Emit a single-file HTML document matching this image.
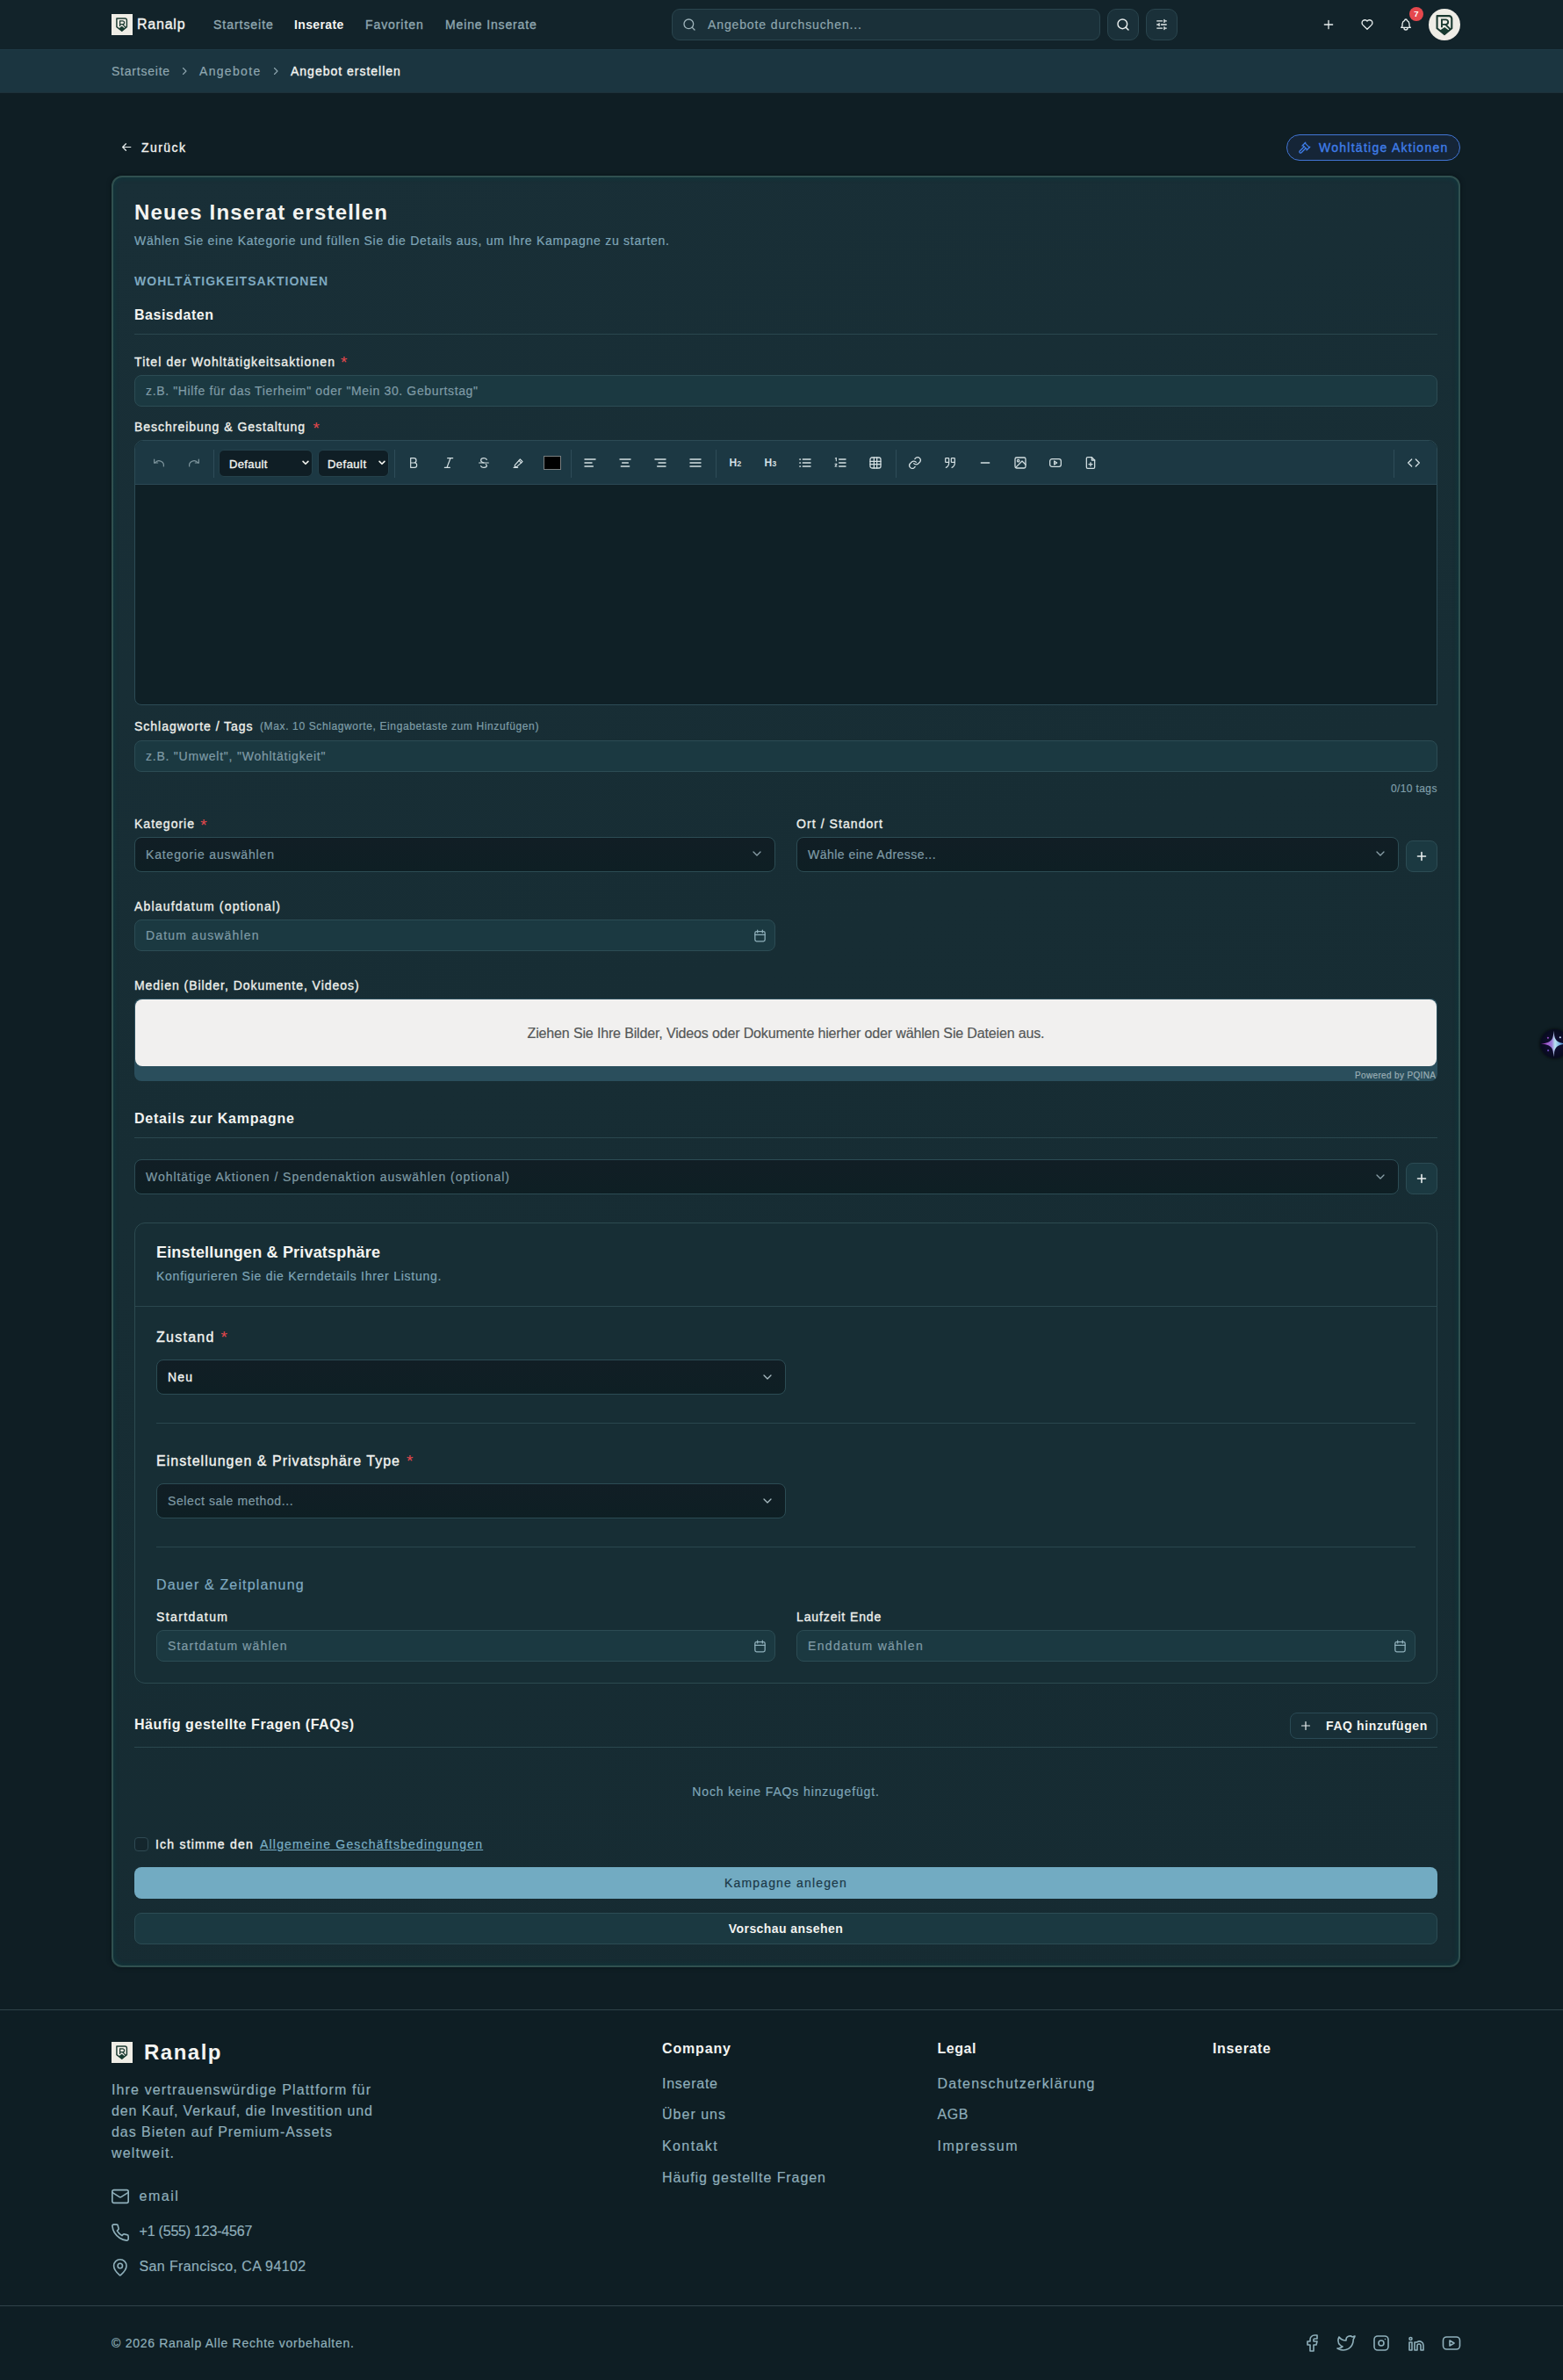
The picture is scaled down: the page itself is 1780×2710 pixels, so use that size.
<!DOCTYPE html>
<html lang="de">
<head>
<meta charset="utf-8">
<title>Ranalp - Angebot erstellen</title>
<style>
*{box-sizing:border-box;margin:0;padding:0}
html,body{width:1780px;height:2710px;overflow:hidden}
body{position:relative;background:#0f1e24;font-family:"Liberation Sans",sans-serif;color:#f3f4f1}
.a{position:absolute}
.t{position:absolute;white-space:nowrap;line-height:1;font-size:14px;top:calc(var(--b)*1px - 0.8465em);-webkit-text-stroke:0.2px currentColor}
svg{display:block;overflow:visible}
.ic{position:absolute;fill:none;stroke:currentColor;stroke-linecap:round;stroke-linejoin:round}
#hdr{left:0;top:0;width:1780px;height:56px;background:#12232a}
#bc{left:0;top:56px;width:1780px;height:50px;background:#1b3540;border-top:1px solid #1f3a45;border-bottom:1px solid #1d3139}
.nav{color:#8fa7b0}
.w{color:#f3f4f1}
.req{color:#e5484d;-webkit-text-stroke:0}
.lbl{color:#eef0ec;-webkit-text-stroke:0.35px currentColor}
.m{-webkit-text-stroke:0.35px currentColor}
.ph{color:#7f9ba6}
.inp{position:absolute;background:#1b3941;border:1px solid #2c4c54;border-radius:8px}
.sel{position:absolute;background:linear-gradient(180deg,#111e25,#0e1f24);border:1px solid #2c4c54;border-radius:8px}
.dv{position:absolute;height:1px;background:#2a474e}
.b36{position:absolute;width:36px;height:36px;border:1px solid #2c4c54;border-radius:8px;background:#1b3941}
.tb{color:#d3dfe2}
.ft{color:#8eaebb;font-size:16px}
.t[style*="font-weight:bold"]{-webkit-text-stroke:0}
.sep{position:absolute;width:1px;height:32px;top:512px;background:#2e4c58}
</style>
</head>
<body>

<svg width="0" height="0" style="position:absolute"><defs><symbol id="lg" viewBox="0 0 24 24"><path d="M5.9 4.9H15.2a2.2 2.2 0 0 1 2.2 2.2V14.6L11.8 19.3 5.9 14.6z" fill="none" stroke="#1b3a31" stroke-width="1.45" stroke-linejoin="round"/><path d="M9.6 14V7.8h3.1a1.9 1.9 0 0 1 0 3.8H9.6M12.5 11.6l3.9 3.9" fill="none" stroke="#1b3a31" stroke-width="1.3"/><path d="M8 16.4 11.8 13.7 15.3 16.4 11.8 19.6z" fill="#173a30"/></symbol></defs></svg>
<!-- ================= HEADER ================= -->
<div id="hdr" class="a"></div>
<svg class="a" style="left:127px;top:16px" width="24" height="24" viewBox="0 0 24 24"><rect width="24" height="24" fill="#efede6"/><use href="#lg"/></svg>
<div class="t w m" style="--b:34;left:156px;font-size:16px;letter-spacing:0.777px">Ranalp</div>
<div class="t nav m" style="--b:33.3;left:243px;letter-spacing:0.962px">Startseite</div>
<div class="t w" style="--b:33.3;left:335px;font-weight:bold;letter-spacing:0.371px">Inserate</div>
<div class="t nav m" style="--b:33.3;left:416px;letter-spacing:0.916px">Favoriten</div>
<div class="t nav m" style="--b:33.3;left:507px;letter-spacing:0.860px">Meine Inserate</div>

<!-- search -->
<div class="a" style="left:765px;top:10px;width:488px;height:36px;background:#1a3039;border:1px solid #2a454e;border-radius:9px"></div>
<svg class="ic" style="left:777px;top:20px;color:#9fb4bb" width="16" height="16" viewBox="0 0 24 24" stroke-width="2"><circle cx="11" cy="11" r="8"/><path d="m21 21-4.3-4.3"/></svg>
<div class="t" style="--b:33;left:806px;color:#8ea6ae;letter-spacing:0.878px">Angebote durchsuchen...</div>
<div class="b36" style="left:1261px;top:10px;background:#1a3039;border-color:#2a454e;border-radius:10px"></div>
<svg class="ic" style="left:1271px;top:20px;color:#e8eeee" width="16" height="16" viewBox="0 0 24 24" stroke-width="2.2"><circle cx="11" cy="11" r="8"/><path d="m21 21-4.3-4.3"/></svg>
<div class="b36" style="left:1305px;top:10px;background:#1a3039;border-color:#2a454e;border-radius:10px"></div>
<svg class="ic" style="left:1316px;top:21px;color:#e8eeee" width="14" height="14" viewBox="0 0 24 24" stroke-width="2.2"><path d="M3 5h10M17 5h4M3 12h4M11 12h10M3 19h10M17 19h4M17 2.5v5M7 9.5v5M17 16.5v5"/></svg>

<!-- right icons -->
<svg class="ic" style="left:1506px;top:21px;color:#e8eeee" width="14" height="14" viewBox="0 0 24 24" stroke-width="2.2"><path d="M12 4v16M4 12h16"/></svg>
<svg class="ic" style="left:1549px;top:20px;color:#e8eeee" width="16" height="16" viewBox="0 0 24 24" stroke-width="2"><path d="M19.5 12.6 12 20l-7.5-7.4A5 5 0 1 1 12 6a5 5 0 1 1 7.5 6.6z"/></svg>
<svg class="ic" style="left:1593px;top:20px;color:#e8eeee" width="16" height="16" viewBox="0 0 24 24" stroke-width="2"><path d="M10 5a2 2 0 1 1 4 0a7 7 0 0 1 4 6v3a4 4 0 0 0 2 3H4a4 4 0 0 0 2-3v-3a7 7 0 0 1 4-6"/><path d="M9 17v1a3 3 0 0 0 6 0v-1"/></svg>
<div class="a" style="left:1605px;top:8px;width:16px;height:16px;border-radius:50%;background:#e5484d"></div>
<div class="t" style="--b:18.6;left:1605px;width:16px;text-align:center;font-size:9.5px;font-weight:bold;color:#fff">7</div>
<div class="a" style="left:1627px;top:10px;width:36px;height:36px;border-radius:50%;background:#efede6;overflow:hidden"></div>
<svg class="a" style="left:1628px;top:11.2px" width="34.9" height="34.9" viewBox="0 0 24 24"><use href="#lg"/></svg>

<!-- ================= BREADCRUMB ================= -->
<div id="bc" class="a"></div>
<div class="t nav" style="--b:86.2;left:127px;letter-spacing:0.773px">Startseite</div>
<svg class="ic" style="left:204px;top:75.3px;color:#8fa7b0" width="12" height="12" viewBox="0 0 24 24" stroke-width="2.2"><path d="m9 5 7 7-7 7"/></svg>
<div class="t nav" style="--b:86.2;left:227px;letter-spacing:1.321px">Angebote</div>
<svg class="ic" style="left:308px;top:75.3px;color:#8fa7b0" width="12" height="12" viewBox="0 0 24 24" stroke-width="2.2"><path d="m9 5 7 7-7 7"/></svg>
<div class="t w m" style="--b:86.2;left:331px;letter-spacing:0.995px">Angebot erstellen</div>

<!-- ================= BACK ROW ================= -->
<svg class="ic" style="left:138px;top:161px;color:#e8eeee" width="13" height="13" viewBox="0 0 24 24" stroke-width="2.2"><path d="M20 12H4M10 5l-7 7 7 7"/></svg>
<div class="t w m" style="--b:173;left:161px;letter-spacing:1.440px">Zurück</div>
<div class="a" style="left:1465px;top:153px;width:198px;height:30px;border:1px solid #4276d6;border-radius:15px;background:#152537"></div>
<svg class="ic" style="left:1478px;top:160.5px;color:#3f7de8" width="15" height="15" viewBox="0 0 24 24" stroke-width="2"><path d="m14.5 12.5-8 8a2.119 2.119 0 1 1-3-3l8-8"/><path d="m16 16 6-6"/><path d="m8 8 6-6"/><path d="m9 7 8 8"/><path d="m21 11-8-8"/></svg>
<div class="t m" style="--b:172.6;left:1502px;color:#3f7de8;letter-spacing:1.267px">Wohltätige Aktionen</div>

<!-- ================= CARD ================= -->
<div class="a" id="card" style="left:127px;top:200px;width:1536px;height:2040px;border:2px solid #30504f;border-radius:12px;background:linear-gradient(160deg,#192f37 0%,#172d34 45%,#162b32 100%);box-shadow:inset 0 0 5px 1px rgba(12,58,64,0.75),0 0 4px 1px rgba(5,15,20,0.5)"></div>

<!-- title -->
<div class="t w" style="--b:250;left:153px;font-size:24px;font-weight:bold;letter-spacing:1.146px">Neues Inserat erstellen</div>
<div class="t" style="--b:279;left:153px;color:#7ea5b7;letter-spacing:0.737px">Wählen Sie eine Kategorie und füllen Sie die Details aus, um Ihre Kampagne zu starten.</div>
<div class="t" style="--b:325;left:153px;font-size:14px;font-weight:bold;color:#7fa9c0;letter-spacing:1.045px">WOHLTÄTIGKEITSAKTIONEN</div>
<div class="t w" style="--b:365;left:153px;font-size:16px;font-weight:bold;letter-spacing:0.514px">Basisdaten</div>
<div class="dv" style="left:153px;top:380px;width:1484px"></div>

<!-- Titel -->
<div class="t lbl" style="--b:416.6;left:153px;letter-spacing:1.104px">Titel der Wohltätigkeitsaktionen</div>
<div class="t req" style="--b:419.4;left:388px;font-size:19px">*</div>
<div class="inp" style="left:153px;top:427px;width:1484px;height:36px"></div>
<div class="t ph" style="--b:450;left:166px;letter-spacing:0.640px">z.B. "Hilfe für das Tierheim" oder "Mein 30. Geburtstag"</div>

<!-- Beschreibung -->
<div class="t lbl" style="--b:491;left:153px;letter-spacing:0.981px">Beschreibung &amp; Gestaltung</div>
<div class="t req" style="--b:494.4;left:356.5px;font-size:19px">*</div>
<div class="a" style="left:153px;top:501px;width:1484px;height:302px;border:1px solid #2c4b55;border-radius:10px 10px 0 8px;background:#0f2026;overflow:hidden">
  <div class="a" style="left:0;top:0;width:1482px;height:50px;background:#1c3843;border-bottom:1px solid #2b4854"></div>
</div>

<!-- toolbar -->
<svg class="ic tb" style="left:173.0px;top:519.0px;color:#7f969e;" width="16" height="16" viewBox="0 0 24 24" stroke-width="1.8"><path d="M4 6v6h6"/><path d="M20 18a8 8 0 0 0-14-6.5L4 12"/></svg>
<svg class="ic tb" style="left:213.0px;top:519.0px;color:#7f969e;" width="16" height="16" viewBox="0 0 24 24" stroke-width="1.8"><path d="M20 6v6h-6"/><path d="M4 18a8 8 0 0 1 14-6.5l2 .5"/></svg>
<div class="sep" style="left:243px"></div>
<div class="sep" style="left:449px"></div>
<div class="sep" style="left:650px"></div>
<div class="sep" style="left:815px"></div>
<div class="sep" style="left:1020px"></div>
<div class="sep" style="left:1587px"></div>
<div class="a" style="left:249px;top:512px;width:107px;height:31px;background:#0f1e25;border:1px solid #24414b;border-radius:6px"></div>
<div class="t w m" style="--b:532.7;left:261px;font-size:13px;letter-spacing:0.366px">Default</div>
<svg class="ic" style="left:343px;top:522px;color:#f0f2ee" width="10" height="10" viewBox="0 0 24 24" stroke-width="4"><path d="m5 8 7 7 7-7"/></svg>
<div class="a" style="left:362px;top:512px;width:81px;height:31px;background:#0f1e25;border:1px solid #24414b;border-radius:6px"></div>
<div class="t w m" style="--b:532.7;left:373px;font-size:13px;letter-spacing:0.468px">Default</div>
<svg class="ic" style="left:430px;top:522px;color:#f0f2ee" width="10" height="10" viewBox="0 0 24 24" stroke-width="4"><path d="m5 8 7 7 7-7"/></svg>
<svg class="ic tb" style="left:463.0px;top:519.0px;" width="16" height="16" viewBox="0 0 24 24" stroke-width="1.8"><path d="M7 4h5.5a4 4 0 0 1 0 8H7zM7 12h6.5a4 4 0 0 1 0 8H7z"/></svg>
<svg class="ic tb" style="left:503.0px;top:519.0px;" width="16" height="16" viewBox="0 0 24 24" stroke-width="1.8"><path d="M10 4h9M5 20h9M15 4 9 20"/></svg>
<svg class="ic tb" style="left:543.0px;top:519.0px;" width="16" height="16" viewBox="0 0 24 24" stroke-width="1.8"><path d="M4 12h16"/><path d="M17 6.5C16 5 14.5 4 12 4 9 4 7 5.5 7 8s2 3.5 5 4"/><path d="M15.5 14.5c.8.6 1.5 1.5 1.5 2.5 0 2-2 3-5 3-2.5 0-4.3-1-5-2.5"/></svg>
<svg class="ic tb" style="left:583.0px;top:519.0px;" width="16" height="16" viewBox="0 0 24 24" stroke-width="1.8"><path d="M3 20h7M5 16l9-10 4 4-10 9H5z"/><path d="M12 8l4 4"/></svg>
<div class="a" style="left:619px;top:519px;width:20px;height:16px;background:#000;border:1px solid #7a7f80"></div>
<svg class="ic tb" style="left:664.0px;top:519.0px;" width="16" height="16" viewBox="0 0 24 24" stroke-width="2.2"><path d="M3 6h18M3 12h12M3 18h14"/></svg>
<svg class="ic tb" style="left:703.5px;top:519.0px;" width="16" height="16" viewBox="0 0 24 24" stroke-width="2.2"><path d="M3 6h18M7 12h10M5 18h14"/></svg>
<svg class="ic tb" style="left:744.0px;top:519.0px;" width="16" height="16" viewBox="0 0 24 24" stroke-width="2.2"><path d="M3 6h18M9 12h12M7 18h14"/></svg>
<svg class="ic tb" style="left:784.0px;top:519.0px;" width="16" height="16" viewBox="0 0 24 24" stroke-width="2.2"><path d="M3 6h18M3 12h18M3 18h18"/></svg>
<div class="t tb" style="--b:531.5;left:830.5px;font-size:12px;font-weight:bold">H<span style="font-size:9px">2</span></div>
<div class="t tb" style="--b:531.5;left:870.5px;font-size:12px;font-weight:bold">H<span style="font-size:9px">3</span></div>
<svg class="ic tb" style="left:909.0px;top:519.0px;" width="16" height="16" viewBox="0 0 24 24" stroke-width="2.2"><path d="M8 6h13M8 12h13M8 18h13"/><path d="M3 6h.5M3 12h.5M3 18h.5" stroke-width="2.6"/></svg>
<svg class="ic tb" style="left:949.0px;top:519.0px;" width="16" height="16" viewBox="0 0 24 24" stroke-width="2.2"><path d="M10 6h11M10 12h11M10 18h11"/><path d="M3.5 4.5 5 3.5v5M3 14h3l-3 4h3" stroke-width="1.6"/></svg>
<svg class="ic tb" style="left:989.0px;top:519.0px;" width="16" height="16" viewBox="0 0 24 24" stroke-width="1.9"><rect x="3" y="3" width="18" height="18" rx="3"/><path d="M3 9.5h18M3 14.5h18M9.5 3v18M14.5 3v18"/></svg>
<svg class="ic tb" style="left:1034.0px;top:519.0px;" width="16" height="16" viewBox="0 0 24 24" stroke-width="1.9"><path d="M10 13a5 5 0 0 0 7.5.5l3-3a5 5 0 0 0-7-7l-1.7 1.7"/><path d="M14 11a5 5 0 0 0-7.5-.5l-3 3a5 5 0 0 0 7 7l1.7-1.7"/></svg>
<svg class="ic tb" style="left:1073.5px;top:519.0px;" width="16" height="16" viewBox="0 0 24 24" stroke-width="1.8"><path d="M5 4h4a1 1 0 0 1 1 1v7c0 3.5-1.5 6.5-5 8M5 4a1 1 0 0 0-1 1v5a1 1 0 0 0 1 1h5M15 4h4a1 1 0 0 1 1 1v7c0 3.5-1.5 6.5-5 8M15 4a1 1 0 0 0-1 1v5a1 1 0 0 0 1 1h5"/></svg>
<svg class="ic tb" style="left:1114.0px;top:519.0px;" width="16" height="16" viewBox="0 0 24 24" stroke-width="2.2"><path d="M5 12h14"/></svg>
<svg class="ic tb" style="left:1154.0px;top:519.0px;" width="16" height="16" viewBox="0 0 24 24" stroke-width="1.9"><rect x="3" y="3" width="18" height="18" rx="2.5"/><circle cx="8.5" cy="8.5" r="1.8"/><path d="m4 20 11-11 6 6"/></svg>
<svg class="ic tb" style="left:1194.0px;top:519.0px;" width="16" height="16" viewBox="0 0 24 24" stroke-width="1.9"><rect x="2.5" y="5.5" width="19" height="13" rx="3.5"/><path d="m10 9 4.5 3-4.5 3z"/></svg>
<svg class="ic tb" style="left:1234.0px;top:519.0px;" width="16" height="16" viewBox="0 0 24 24" stroke-width="1.9"><path d="M14 2.5H7a2 2 0 0 0-2 2v15a2 2 0 0 0 2 2h10a2 2 0 0 0 2-2v-12z"/><path d="M14 2.5v5h5M12 11.5v6M9 14.5h6"/></svg>
<svg class="ic tb" style="left:1601.5px;top:519.0px;" width="16" height="16" viewBox="0 0 24 24" stroke-width="2"><path d="m8.5 6-6 6 6 6M15.5 6l6 6-6 6"/></svg>

<!-- tags -->
<div class="t lbl" style="--b:831.8;left:153px;letter-spacing:0.975px">Schlagworte / Tags</div>
<div class="t" style="--b:831;left:296px;font-size:12px;color:#7f9ea9;letter-spacing:0.624px">(Max. 10 Schlagworte, Eingabetaste zum Hinzufügen)</div>
<div class="inp" style="left:153px;top:843px;width:1484px;height:36px"></div>
<div class="t ph" style="--b:866;left:166px;letter-spacing:0.768px">z.B. "Umwelt", "Wohltätigkeit"</div>
<div class="t" style="--b:902.4;left:1584px;font-size:12px;color:#7f9ea9;letter-spacing:0.378px">0/10 tags</div>

<!-- kategorie / ort -->
<div class="t lbl" style="--b:943;left:153px;letter-spacing:1.008px">Kategorie</div>
<div class="t req" style="--b:946.4;left:228.3px;font-size:19px">*</div>
<div class="sel" style="left:153px;top:953px;width:730px;height:40px"></div>
<div class="t ph" style="--b:978;left:166px;letter-spacing:0.846px">Kategorie auswählen</div>
<svg class="ic" style="left:856.0px;top:966.0px;color:#8aa0a8" width="12" height="12" viewBox="0 0 24 24" stroke-width="2.6"><path d="m4 8 8 8 8-8"/></svg>
<div class="t lbl" style="--b:943;left:907px;letter-spacing:1.074px">Ort / Standort</div>
<div class="sel" style="left:907px;top:953px;width:686px;height:40px"></div>
<div class="t ph" style="--b:978;left:920px;letter-spacing:0.471px">Wähle eine Adresse...</div>
<svg class="ic" style="left:1566.0px;top:966.0px;color:#8aa0a8" width="12" height="12" viewBox="0 0 24 24" stroke-width="2.6"><path d="m4 8 8 8 8-8"/></svg>
<div class="b36" style="left:1601px;top:957px"></div>
<svg class="ic" style="left:1613px;top:969px;color:#e8eeee" width="12" height="12" viewBox="0 0 24 24" stroke-width="3.2"><path d="M12 3v18M3 12h18"/></svg>

<!-- ablaufdatum -->
<div class="t lbl" style="--b:1037;left:153px;letter-spacing:1.196px">Ablaufdatum (optional)</div>
<div class="inp" style="left:153px;top:1047px;width:730px;height:36px"></div>
<div class="t ph" style="--b:1070;left:166px;letter-spacing:1.181px">Datum auswählen</div>
<svg class="ic" style="left:856.5px;top:1056.5px;color:#8fb0bb" width="17" height="17" viewBox="0 0 24 24" stroke-width="1.8"><rect x="4" y="5" width="16" height="16" rx="2.5"/><path d="M8 3v4M16 3v4M4 10.5h16"/></svg>

<!-- medien -->
<div class="t lbl" style="--b:1127;left:153px;letter-spacing:0.962px">Medien (Bilder, Dokumente, Videos)</div>
<div class="a" style="left:153px;top:1137px;width:1484px;height:94px;background:#2a4e5c;border-radius:8px"></div>
<div class="a" style="left:154px;top:1138px;width:1482px;height:76px;background:#f1f0ef;border-radius:8px"></div>
<div class="t" style="--b:1182.6;left:153px;width:1484px;text-align:center;font-size:16px;color:#555858;letter-spacing:-0.148px">Ziehen Sie Ihre Bilder, Videos oder Dokumente hierher oder wählen Sie Dateien aus.</div>
<div class="t" style="--b:1228;left:1543px;font-size:10px;color:#9aaeb5;letter-spacing:0.353px">Powered by PQINA</div>

<!-- details -->
<div class="t w" style="--b:1280;left:153px;font-size:16px;font-weight:bold;letter-spacing:0.781px">Details zur Kampagne</div>
<div class="dv" style="left:153px;top:1295px;width:1484px"></div>
<div class="sel" style="left:153px;top:1320px;width:1440px;height:40px"></div>
<div class="t ph" style="--b:1345;left:166px;letter-spacing:0.952px">Wohltätige Aktionen / Spendenaktion auswählen (optional)</div>
<svg class="ic" style="left:1566.0px;top:1334.0px;color:#8aa0a8" width="12" height="12" viewBox="0 0 24 24" stroke-width="2.6"><path d="m4 8 8 8 8-8"/></svg>
<div class="b36" style="left:1601px;top:1324px"></div>
<svg class="ic" style="left:1613px;top:1336px;color:#e8eeee" width="12" height="12" viewBox="0 0 24 24" stroke-width="3.2"><path d="M12 3v18M3 12h18"/></svg>

<!-- inner settings card -->
<div class="a" style="left:153px;top:1392px;width:1484px;height:525px;border:1px solid #2c4a50;border-radius:12px;background:#172e35"></div>
<div class="t w" style="--b:1431.8;left:178px;font-size:18px;font-weight:bold;letter-spacing:0.182px">Einstellungen &amp; Privatsphäre</div>
<div class="t" style="--b:1458;left:178px;color:#7ea5b7;letter-spacing:0.742px">Konfigurieren Sie die Kerndetails Ihrer Listung.</div>
<div class="dv" style="left:154px;top:1487px;width:1482px"></div>

<div class="t w m" style="--b:1529;left:178px;font-size:16px;letter-spacing:1.263px">Zustand</div>
<div class="t req" style="--b:1529.4;left:251.5px;font-size:19px">*</div>
<div class="sel" style="left:178px;top:1548px;width:717px;height:40px"></div>
<div class="t w m" style="--b:1573;left:191px;letter-spacing:1.156px">Neu</div>
<svg class="ic" style="left:868.0px;top:1562.0px;color:#a9bcc2" width="12" height="12" viewBox="0 0 24 24" stroke-width="2.6"><path d="m4 8 8 8 8-8"/></svg>
<div class="dv" style="left:178px;top:1620px;width:1434px"></div>

<div class="t w m" style="--b:1670;left:178px;font-size:16px;letter-spacing:1.022px">Einstellungen &amp; Privatsphäre Type</div>
<div class="t req" style="--b:1670.4;left:463px;font-size:19px">*</div>
<div class="sel" style="left:178px;top:1689px;width:717px;height:40px"></div>
<div class="t ph" style="--b:1714;left:191px;letter-spacing:0.592px">Select sale method...</div>
<svg class="ic" style="left:868.0px;top:1703.0px;color:#a9bcc2" width="12" height="12" viewBox="0 0 24 24" stroke-width="2.6"><path d="m4 8 8 8 8-8"/></svg>
<div class="dv" style="left:178px;top:1761px;width:1434px"></div>

<div class="t" style="--b:1811;left:178px;font-size:16px;color:#7fa9c0;letter-spacing:1.157px">Dauer &amp; Zeitplanung</div>
<div class="t lbl" style="--b:1846;left:178px;letter-spacing:1.391px">Startdatum</div>
<div class="inp" style="left:178px;top:1856px;width:705px;height:36px"></div>
<div class="t ph" style="--b:1879;left:191px;letter-spacing:1.179px">Startdatum wählen</div>
<svg class="ic" style="left:856.5px;top:1865.5px;color:#8fb0bb" width="17" height="17" viewBox="0 0 24 24" stroke-width="1.8"><rect x="4" y="5" width="16" height="16" rx="2.5"/><path d="M8 3v4M16 3v4M4 10.5h16"/></svg>
<div class="t lbl" style="--b:1846;left:907px;letter-spacing:0.889px">Laufzeit Ende</div>
<div class="inp" style="left:907px;top:1856px;width:705px;height:36px"></div>
<div class="t ph" style="--b:1879;left:920px;letter-spacing:1.330px">Enddatum wählen</div>
<svg class="ic" style="left:1585.5px;top:1865.5px;color:#8fb0bb" width="17" height="17" viewBox="0 0 24 24" stroke-width="1.8"><rect x="4" y="5" width="16" height="16" rx="2.5"/><path d="M8 3v4M16 3v4M4 10.5h16"/></svg>

<!-- FAQ -->
<div class="t w" style="--b:1970;left:153px;font-size:16px;font-weight:bold;letter-spacing:0.558px">Häufig gestellte Fragen (FAQs)</div>
<div class="a" style="left:1469px;top:1950px;width:168px;height:30px;border:1px solid #2a4a55;border-radius:8px;background:#182f37"></div>
<svg class="ic" style="left:1481px;top:1959px;color:#e8eeee" width="12" height="12" viewBox="0 0 24 24" stroke-width="2.4"><path d="M12 3v18M3 12h18"/></svg>
<div class="t w" style="--b:1970;left:1510px;font-weight:bold;letter-spacing:0.613px">FAQ hinzufügen</div>
<div class="dv" style="left:153px;top:1989px;width:1484px"></div>
<div class="t" style="--b:2045;left:153px;width:1484px;text-align:center;color:#7ea5b7;letter-spacing:0.870px">Noch keine FAQs hinzugefügt.</div>

<!-- terms + buttons -->
<div class="a" style="left:153px;top:2092px;width:16px;height:16px;border:1px solid #2f4a53;border-radius:4px;background:#14262d"></div>
<div class="t w m" style="--b:2105;left:177px;letter-spacing:1.220px">Ich stimme den</div>
<div class="t" style="--b:2105;left:296px;color:#7aafc6;text-decoration:underline;letter-spacing:1.195px">Allgemeine Geschäftsbedingungen</div>
<div class="a" style="left:153px;top:2126px;width:1484px;height:36px;background:#72abc2;border-radius:8px"></div>
<div class="t" style="--b:2149;left:153px;width:1484px;text-align:center;color:#1c3948;letter-spacing:1.157px">Kampagne anlegen</div>
<div class="inp" style="left:153px;top:2178px;width:1484px;height:36px"></div>
<div class="t w" style="--b:2201;left:153px;width:1484px;text-align:center;font-weight:bold;letter-spacing:0.436px">Vorschau ansehen</div>

<!-- sparkle widget -->
<div class="a" style="left:1753.5px;top:1171.5px;width:33px;height:33px;border-radius:50%;background:radial-gradient(circle at 50% 50%,#140f3a 0%,#080b20 65%,#060a18 100%);box-shadow:0 0 3px 1px rgba(0,0,0,0.5)"></div>
<svg class="a" style="left:1753px;top:1172px" width="33" height="33" viewBox="0 0 34 34"><defs><linearGradient id="sg" x1="0" y1="0" x2="1" y2="0"><stop offset="0" stop-color="#a52fc0"/><stop offset="0.42" stop-color="#9a7ad8"/><stop offset="0.55" stop-color="#b9e4f2"/><stop offset="1" stop-color="#2368c8"/></linearGradient></defs><path d="M17 1.5C17.7 11.5 18.8 15.8 32 17 18.8 18.2 17.7 22.5 17 32.5 16.3 22.5 15.2 18.2 2 17 15.2 15.8 16.3 11.5 17 1.5z" fill="url(#sg)"/><circle cx="10.2" cy="10" r="1.1" fill="#9b4fc8"/><circle cx="10.4" cy="24.9" r="1.1" fill="#6b4ab8"/><circle cx="24.5" cy="9.5" r="1" fill="#cfe0ff"/></svg>

<!-- ================= FOOTER ================= -->
<div class="a" style="left:0;top:2288px;width:1780px;height:422px;background:#0e1e24;border-top:1px solid #2f4249"></div>
<svg class="a" style="left:127px;top:2325px" width="24" height="24" viewBox="0 0 24 24"><rect width="24" height="24" fill="#efede6"/><use href="#lg"/></svg>
<div class="t w" style="--b:2345;left:164px;font-size:24px;font-weight:bold;letter-spacing:1.495px">Ranalp</div>
<div class="t ft" style="--b:2385.7;left:127px;letter-spacing:1.136px">Ihre vertrauenswürdige Plattform für</div>
<div class="t ft" style="--b:2409.5;left:127px;letter-spacing:0.863px">den Kauf, Verkauf, die Investition und</div>
<div class="t ft" style="--b:2433.7;left:127px;letter-spacing:0.961px">das Bieten auf Premium-Assets</div>
<div class="t ft" style="--b:2457.9;left:127px;letter-spacing:1.205px">weltweit.</div>
<svg class="ic" style="left:126px;top:2489.5px;color:#8fb0bb" width="22" height="22" viewBox="0 0 24 24" stroke-width="1.8"><rect width="20" height="16" x="2" y="4" rx="2"/><path d="m22 7-8.97 5.7a1.94 1.94 0 0 1-2.06 0L2 7"/></svg>
<div class="t ft" style="--b:2507;left:158.5px;letter-spacing:1.513px">email</div>
<svg class="ic" style="left:126px;top:2531px;color:#8fb0bb" width="22" height="22" viewBox="0 0 24 24" stroke-width="1.8"><path d="M22 16.92v3a2 2 0 0 1-2.18 2 19.79 19.79 0 0 1-8.63-3.07 19.5 19.5 0 0 1-6-6 19.79 19.79 0 0 1-3.07-8.67A2 2 0 0 1 4.11 2h3a2 2 0 0 1 2 1.72 12.84 12.84 0 0 0 .7 2.81 2 2 0 0 1-.45 2.11L8.09 9.91a16 16 0 0 0 6 6l1.27-1.27a2 2 0 0 1 2.11-.45 12.84 12.84 0 0 0 2.81.7A2 2 0 0 1 22 16.92z"/></svg>
<div class="t ft" style="--b:2546.8;left:158.5px;letter-spacing:-0.207px">+1 (555) 123-4567</div>
<svg class="ic" style="left:126px;top:2570.7px;color:#8fb0bb" width="21.6" height="21.6" viewBox="0 0 24 24" stroke-width="1.8"><path d="M20 10c0 4.993-5.539 10.193-7.399 11.799a1 1 0 0 1-1.202 0C9.539 20.193 4 14.993 4 10a8 8 0 0 1 16 0"/><circle cx="12" cy="10" r="3"/></svg>
<div class="t ft" style="--b:2586.8;left:158.5px;letter-spacing:0.371px">San Francisco, CA 94102</div>

<div class="t w" style="--b:2338.3;left:754px;font-size:16px;font-weight:bold;letter-spacing:0.848px">Company</div>
<div class="t ft" style="--b:2378.2;left:754px;letter-spacing:0.741px">Inserate</div>
<div class="t ft" style="--b:2414;left:754px;letter-spacing:1.009px">Über uns</div>
<div class="t ft" style="--b:2449.8;left:754px;letter-spacing:1.388px">Kontakt</div>
<div class="t ft" style="--b:2485.5;left:754px;letter-spacing:0.935px">Häufig gestellte Fragen</div>
<div class="t w" style="--b:2338.3;left:1067.5px;font-size:16px;font-weight:bold;letter-spacing:0.549px">Legal</div>
<div class="t ft" style="--b:2378.2;left:1067.5px;letter-spacing:1.229px">Datenschutzerklärung</div>
<div class="t ft" style="--b:2414;left:1067.5px;letter-spacing:0.600px">AGB</div>
<div class="t ft" style="--b:2449.8;left:1067.5px;letter-spacing:1.484px">Impressum</div>
<div class="t w" style="--b:2338.3;left:1381px;font-size:16px;font-weight:bold;letter-spacing:0.661px">Inserate</div>

<div class="dv" style="left:0;top:2625px;width:1780px;background:#2f4249"></div>
<div class="t" style="--b:2673.3;left:127px;color:#8fb0bb;letter-spacing:0.717px">© 2026 Ranalp Alle Rechte vorbehalten.</div>
<svg class="ic" style="left:1481.5px;top:2656px;color:#8fb0bb" width="24" height="24" viewBox="0 0 24 24" stroke-width="1.6"><path d="M7 10v4h3v7h4v-7h3l1-4h-4V8a1 1 0 0 1 1-1h3V3h-3a5 5 0 0 0-5 5v2H7"/></svg>
<svg class="ic" style="left:1521px;top:2656px;color:#8fb0bb" width="24" height="24" viewBox="0 0 24 24" stroke-width="1.6"><path d="M22 4.01c-1 .49-1.98.689-3 .99-1.121-1.265-2.783-1.335-4.38-.737S11.977 6.323 12 8v1c-3.245.083-6.135-1.395-8-4 0 0-4.182 7.433 4 11-1.872 1.247-3.739 2.088-6 2 3.308 1.803 6.913 2.423 10.034 1.517 3.58-1.04 6.522-3.723 7.651-7.742a13.84 13.84 0 0 0 .497-3.753C20.18 7.773 21.692 5.25 22 4.009z"/></svg>
<svg class="ic" style="left:1561px;top:2656px;color:#8fb0bb" width="24" height="24" viewBox="0 0 24 24" stroke-width="1.6"><rect x="4" y="4" width="16" height="16" rx="4"/><circle cx="12" cy="12" r="3"/><path d="M16.5 7.5v.01"/></svg>
<svg class="ic" style="left:1601px;top:2656px;color:#8fb0bb" width="24" height="24" viewBox="0 0 24 24" stroke-width="1.6"><path d="M8 11v5M8 8v.01M12 16v-5M16 16v-3a2 2 0 1 0-4 0M3 7a4 4 0 0 1 4-4h10a4 4 0 0 1 4 4v10a4 4 0 0 1-4 4H7a4 4 0 0 1-4-4z" style="display:none"/><path d="M4 11v9h3v-9zM5.5 5.5a1.5 1.5 0 1 0 0 3 1.5 1.5 0 0 0 0-3zM10 11v9h3v-5a2 2 0 0 1 4 0v5h3v-5.5a4.5 4.5 0 0 0-7-3.8V11z"/></svg>
<svg class="ic" style="left:1641px;top:2656px;color:#8fb0bb" width="24" height="24" viewBox="0 0 24 24" stroke-width="1.6"><rect x="2.5" y="5" width="19" height="14" rx="4"/><path d="m10 9 5 3-5 3z"/></svg>


</body>
</html>
